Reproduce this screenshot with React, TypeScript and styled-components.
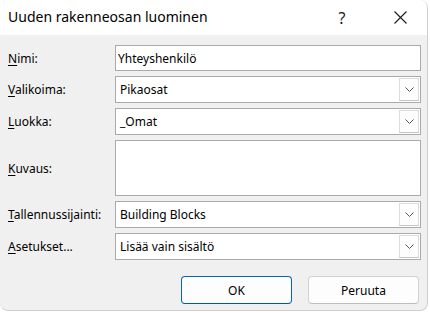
import React from 'react';
import styled, { createGlobalStyle } from 'styled-components';

const GlobalStyle = createGlobalStyle`
  html, body {
    margin: 0;
    padding: 0;
    background: #ffffff;
  }
  body {
    font-family: "Noto Sans", "Liberation Sans", sans-serif;
    color: #000;
  }
`;

const Window = styled.div`
  width: 427px;
  height: 310px;
  background: #f0f0f0;
  border-right: 1px solid #cfcfcf;
  border-bottom: 1px solid #cfcfcf;
  border-radius: 0 8px 8px 8px;
  overflow: hidden;
  display: flex;
  flex-direction: column;
`;

const TitleBar = styled.div`
  height: 35px;
  background: #ffffff;
  display: flex;
  align-items: center;
  padding-left: 8px;
  flex-shrink: 0;
`;

const Title = styled.div`
  flex: 1;
  font-size: 14px;
  line-height: 1;
  margin-top: -2px;
`;

const TitleButton = styled.div<{ $w: number; $gap?: number }>`
  width: ${(p) => p.$w}px;
  margin-right: ${(p) => p.$gap ?? 0}px;
  height: 35px;
  display: flex;
  align-items: center;
  justify-content: center;
  font-size: 16px;
  color: #1a1a1a;
`;

const Body = styled.div`
  padding: 10px 6px 0 8px;
  display: flex;
  flex-direction: column;
`;

const FormGrid = styled.div`
  display: grid;
  grid-template-columns: 107px 1fr;
  row-gap: 5px;
`;

const Label = styled.label`
  font-size: 12px;
  display: flex;
  align-items: center;
  color: #000;

  u {
    text-decoration: underline;
    text-underline-offset: 2px;
  }
`;

const TextField = styled.div<{ $h: number }>`
  height: ${(p) => p.$h}px;
  box-sizing: border-box;
  border: 1px solid #aaaaaa;
  background: #ffffff;
  font-size: 12px;
  display: flex;
  align-items: center;
  padding-left: 2px;
`;

const TextArea = styled.div`
  height: 56px;
  box-sizing: border-box;
  border: 1px solid #aaaaaa;
  background: #ffffff;
`;

const Combo = styled.div`
  height: 27px;
  box-sizing: border-box;
  border: 1px solid #aaaaaa;
  background: #ffffff;
  display: flex;
  align-items: stretch;
  font-size: 12px;
`;

const ComboValue = styled.div`
  flex: 1;
  display: flex;
  align-items: center;
  padding-left: 4px;
`;

const ComboButton = styled.div`
  width: 20px;
  margin: 1px 1px 1px 0;
  border: 1px solid #dcdcdc;
  border-bottom-color: #c4c4c4;
  box-sizing: border-box;
  background: #fdfdfd;
  display: flex;
  align-items: center;
  justify-content: center;
`;

const ButtonRow = styled.div`
  display: flex;
  justify-content: flex-end;
  gap: 16px;
  margin-top: 16px;
  padding-right: 2px;
`;

const DialogButton = styled.button<{ $primary?: boolean }>`
  width: 111px;
  height: 28px;
  box-sizing: border-box;
  border-radius: 4px;
  border: 1px solid ${(p) => (p.$primary ? '#0067c0' : '#d1d1d1')};
  border-bottom-color: ${(p) => (p.$primary ? '#0058a8' : '#bdbdbd')};
  background: #fdfdfd;
  font-family: "Noto Sans", "Liberation Sans", sans-serif;
  font-size: 12px;
  color: #000;
  padding: 0;
`;

const Chevron = () => (
  <svg width="9" height="5" viewBox="0 0 9 5">
    <path d="M0.5 0.5 L4.5 4.5 L8.5 0.5" fill="none" stroke="#555" strokeWidth="1" />
  </svg>
);

const CloseIcon = () => (
  <svg width="13" height="13" viewBox="0 0 13 13">
    <path d="M0.5 0.5 L12.5 12.5 M12.5 0.5 L0.5 12.5" stroke="#1a1a1a" strokeWidth="1.1" />
  </svg>
);

const fields = [
  { key: 'nimi', access: 'N', rest: 'imi:', kind: 'text', value: 'Yhteyshenkilö' },
  { key: 'valikoima', access: 'V', rest: 'alikoima:', kind: 'combo', value: 'Pikaosat' },
  { key: 'luokka', access: 'L', rest: 'uokka:', kind: 'combo', value: '_Omat' },
  { key: 'kuvaus', access: 'K', rest: 'uvaus:', kind: 'area', value: '' },
  { key: 'tallennus', access: 'T', rest: 'allennussijainti:', kind: 'combo', value: 'Building Blocks' },
  { key: 'asetukset', access: 'A', rest: 'setukset...', kind: 'combo', value: 'Lisää vain sisältö' },
];

export default function App() {
  return (
    <>
      <GlobalStyle />
      <Window>
        <TitleBar>
          <Title>Uuden rakenneosan luominen</Title>
          <TitleButton $w={46} $gap={12}>?</TitleButton>
          <TitleButton $w={46} $gap={4}>
            <CloseIcon />
          </TitleButton>
        </TitleBar>

        <Body>
          <FormGrid>
            {fields.map((f) => (
              <React.Fragment key={f.key}>
                <Label>
                  <span>
                    <u>{f.access}</u>
                    {f.rest}
                  </span>
                </Label>
                {f.kind === 'text' && <TextField $h={26}>{f.value}</TextField>}
                {f.kind === 'area' && <TextArea />}
                {f.kind === 'combo' && (
                  <Combo>
                    <ComboValue>{f.value}</ComboValue>
                    <ComboButton>
                      <Chevron />
                    </ComboButton>
                  </Combo>
                )}
              </React.Fragment>
            ))}
          </FormGrid>

          <ButtonRow>
            <DialogButton $primary>OK</DialogButton>
            <DialogButton>Peruuta</DialogButton>
          </ButtonRow>
        </Body>
      </Window>
    </>
  );
}
